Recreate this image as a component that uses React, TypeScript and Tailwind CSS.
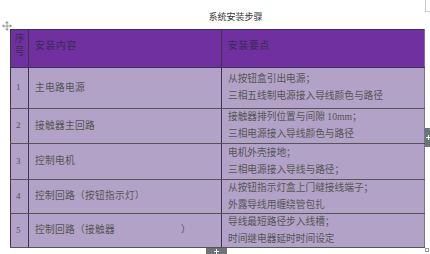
import React from 'react';

type Row = { no: string; item: React.ReactNode; points: string[]; h: string };

const rows: Row[] = [
  { no: '1', item: '主电路电源', points: ['从按钮盒引出电源；', '三相五线制电源接入导线颜色与路径'], h: 'h-[41px]' },
  { no: '2', item: '接触器主回路', points: ['接触器排列位置与间隙 10mm；', '三相电源接入导线颜色与路径'], h: 'h-[35px]' },
  { no: '3', item: '控制电机', points: ['电机外壳接地；', '三相电源接入导线与路径；'], h: 'h-[36px]' },
  { no: '4', item: '控制回路（按钮指示灯）', points: ['从按钮指示灯盒上门缝接线端子；', '外露导线用缠绕管包扎'], h: 'h-[34px]' },
  {
    no: '5',
    item: (
      <>
        控制回路（接触器<span className="inline-block w-[66px]" />）
      </>
    ),
    points: ['导线最短路径步入线槽；', '时间继电器延时时间设定'],
    h: 'h-[34px]',
  },
];

const serif = "font-['Liberation_Serif','Noto_Sans_CJK_SC',serif]";

function PlusGlyph() {
  return (
    <svg width="5" height="5" viewBox="0 0 5 5">
      <rect x="2" y="0" width="1" height="5" fill="#fff" />
      <rect x="0" y="2" width="5" height="1" fill="#fff" />
    </svg>
  );
}

export default function App() {
  return (
    <div className="relative w-[430px] h-[254px] overflow-hidden bg-white">
      {/* page corner mark */}
      <div className="absolute left-[425px] top-0 h-[12px] w-[5px] border-l border-b border-[#c8c8c8]" />

      <p className="pt-[12px] text-center pl-[41px] text-[9px] leading-[10px] text-[#333] font-['Noto_Sans_CJK_SC',sans-serif]">
        系统安装步骤
      </p>

      {/* table move handle */}
      <svg className="absolute left-[2px] top-[21px]" width="10" height="10" viewBox="0 0 10 10">
        <g fill="#9a9a9a">
          <path d="M5 0 L7 2.2 H3 Z" />
          <path d="M5 10 L7 7.8 H3 Z" />
          <path d="M0 5 L2.2 3 V7 Z" />
          <path d="M10 5 L7.8 3 V7 Z" />
          <rect x="4.5" y="2" width="1" height="6" />
          <rect x="2" y="4.5" width="6" height="1" />
        </g>
      </svg>

      <table className={`ml-[10px] mt-[7px] w-[414px] table-fixed border-collapse text-[9.7px] ${serif}`}>
        <colgroup>
          <col className="w-[18px]" />
          <col className="w-[193px]" />
          <col className="w-[203px]" />
        </colgroup>
        <thead>
          <tr className="h-[38px] bg-[#7030a0] text-[#3a2a50]">
            <th className="border border-[#3f3151] p-0 align-top pt-[3px] text-center font-normal leading-[12.5px]">
              序<br />号
            </th>
            <th className="border border-[#3f3151] pl-[6px] align-top pt-[9px] text-left font-normal tracking-[0.8px]">
              安装内容
            </th>
            <th className="border border-[#3f3151] border-r-[#777] pl-[6px] align-top pt-[9px] text-left font-normal tracking-[0.8px]">
              安装要点
            </th>
          </tr>
        </thead>
        <tbody className="bg-[#b2a2c7] text-[#555]">
          {rows.map((r) => (
            <tr key={r.no} className={r.h}>
              <td className="border border-[#3f3151] border-b-[#555] pl-[5px] text-[9px]">{r.no}</td>
              <td className="border border-[#3f3151] border-b-[#555] pl-[6px] tracking-[0.3px] whitespace-nowrap">{r.item}</td>
              <td className="border border-[#3f3151] border-r-[#777] border-b-[#555] pl-[6px] leading-[17px] whitespace-nowrap">
                <div className="-mt-[2px]">
                  {r.points.map((p) => (
                    <div key={p}>{p}</div>
                  ))}
                </div>
              </td>
            </tr>
          ))}
        </tbody>
      </table>

      {/* insert-column tab on the right */}
      <div className="absolute left-[425px] top-[128px] flex h-[19px] w-[6px] items-center justify-center bg-[#6b747b]">
        <PlusGlyph />
      </div>
      {/* insert-row tab at the bottom */}
      <div className="absolute left-[206px] top-[248px] flex h-[7px] w-[21px] items-center justify-center bg-[#6b747b]">
        <PlusGlyph />
      </div>
      {/* resize handle */}
      <div className="absolute left-[425px] top-[248px] h-[4px] w-[4px] border border-[#999] bg-white" />
    </div>
  );
}
